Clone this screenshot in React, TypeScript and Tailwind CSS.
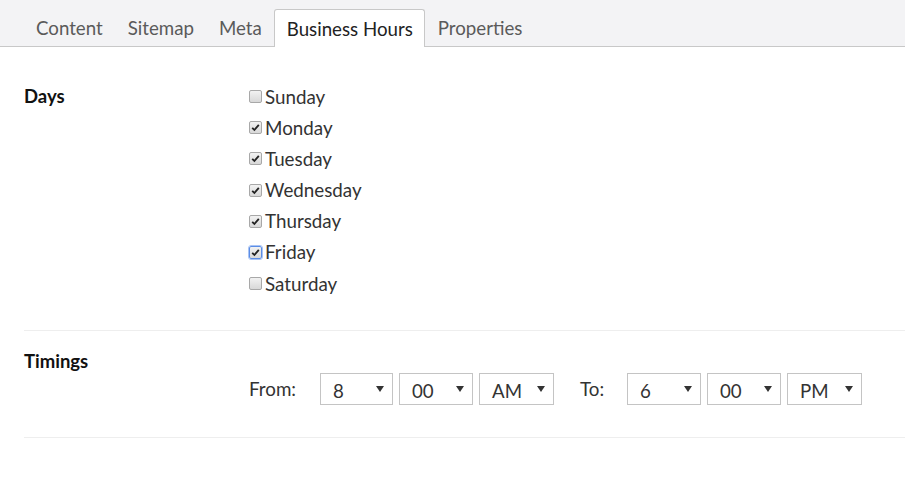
import React from "react";

const days = [
  { name: "Sunday", checked: false },
  { name: "Monday", checked: true },
  { name: "Tuesday", checked: true },
  { name: "Wednesday", checked: true },
  { name: "Thursday", checked: true },
  { name: "Friday", checked: true, focus: true },
  { name: "Saturday", checked: false },
];

function Check({ checked, focus }: { checked: boolean; focus?: boolean }) {
  return (
    <span
      className={
        "flex h-[13px] w-[13px] items-center justify-center rounded-[2px] border bg-gradient-to-b from-[#f2f2f2] to-[#d8d8d8] " +
        (focus ? "border-[#5b8de6] outline outline-1 outline-[#a9c4f5]" : "border-[#a8a8a8]")
      }
    >
      {checked && (
        <svg width="9" height="9" viewBox="0 0 9 9">
          <path d="M1.2 4.8 L3.4 7 L7.8 1.8" fill="none" stroke="#222" strokeWidth="1.8" />
        </svg>
      )}
    </span>
  );
}

function Select({ value, w }: { value: string; w: number }) {
  return (
    <div
      className="flex h-[32px] items-center justify-between border border-[#c4c4c4] bg-white pl-[12px] pr-[8px] text-[18.7px] text-[#333]"
      style={{ width: w }}
    >
      <span className="pt-[4px]">{value}</span>
      <svg width="8" height="6" viewBox="0 0 8 6">
        <path d="M0 0 H8 L4 6 Z" fill="#333" />
      </svg>
    </div>
  );
}

export default function App() {
  const tabs = ["Content", "Sitemap", "Meta", "Business Hours", "Properties"];
  return (
    <div className="min-h-[491px] bg-white text-[#333]" style={{ fontFamily: "Lato, 'Open Sans', sans-serif" }}>
      <div className="flex h-[47px] items-end border-b border-[#c8c8c8] bg-[#f3f3f5] pl-[23.5px]">
        {tabs.map((t) => {
          const active = t === "Business Hours";
          return (
            <div
              key={t}
              className={
                "mb-[-1px] flex h-[38px] items-center px-[11.5px] text-[18.7px] " +
                (active
                  ? "rounded-t-[3px] border border-b-0 border-[#c8c8c8] bg-white text-[#222]"
                  : "border border-transparent text-[#5a5a5a]")
              }
            >
              <span className="pt-[1px]">{t}</span>
            </div>
          );
        })}
      </div>

      <div className="pl-[24px]">
        <div className="flex border-b border-[#eeeeee] pt-[34px] pb-[31px]">
          <div className="w-[225px] text-[18.5px] font-bold leading-[31px] text-[#111]">Days</div>
          <div className="flex flex-col">
            {days.map((d) => (
              <div key={d.name} className="flex h-[31.2px] items-center">
                <Check checked={d.checked} focus={d.focus} />
                <span className="ml-[3px] text-[18.8px] text-[#333]">{d.name}</span>
              </div>
            ))}
          </div>
        </div>

        <div className="flex border-b border-[#eeeeee] pt-[18px] pb-[32px]">
          <div className="w-[225px] text-[18.5px] font-bold leading-[24px] text-[#111]">Timings</div>
          <div className="mt-[24px] flex items-center">
            <span className="w-[71px] text-[18.8px] text-[#333]">From:</span>
            <Select value="8" w={73} />
            <div className="w-[6px]" />
            <Select value="00" w={74} />
            <div className="w-[6px]" />
            <Select value="AM" w={75} />
            <span className="ml-[26px] w-[47px] text-[18.8px] text-[#333]">To:</span>
            <Select value="6" w={74} />
            <div className="w-[6px]" />
            <Select value="00" w={74} />
            <div className="w-[6px]" />
            <Select value="PM" w={75} />
          </div>
        </div>
      </div>
    </div>
  );
}
